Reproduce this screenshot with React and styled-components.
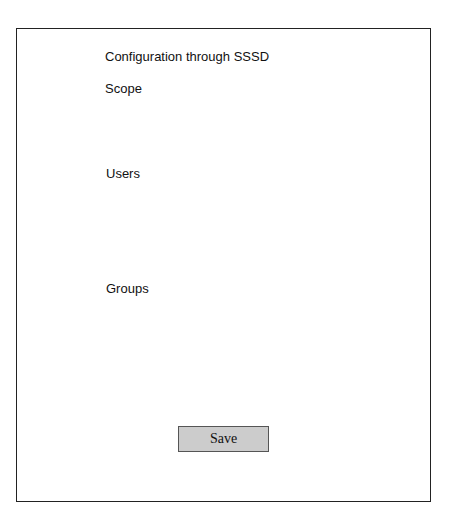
import React from "react";
import styled, { createGlobalStyle } from "styled-components";

const Global = createGlobalStyle`
  html, body { margin: 0; padding: 0; background: #fff; }
  body { font-family: "Liberation Sans", Arial, sans-serif; }
`;

const Frame = styled.div`
  box-sizing: border-box;
  margin: 28px 0 0 16px;
  width: 415px;
  height: 474px;
  border: 1px solid #222;
  background: #fff;
  display: flex;
  flex-direction: column;
  padding-top: 20px;
`;

const Section = styled.div`
  height: ${(p) => p.$h}px;
  padding-left: ${(p) => p.$indent}px;
  flex-shrink: 0;
`;

const Label = styled.div`
  font-size: 13px;
  line-height: 15px;
  color: #111;
`;

const Footer = styled.div`
  display: flex;
  justify-content: center;
`;

const Button = styled.button`
  box-sizing: border-box;
  width: 91px;
  height: 26px;
  background: #cccccc;
  border: 1px solid #555;
  border-radius: 0;
  font-family: "Liberation Serif", "Times New Roman", serif;
  font-size: 14px;
  color: #111;
  padding: 0;
`;

export default function App() {
  return (
    <>
      <Global />
      <Frame>
        <Section $h={32} $indent={88}>
          <Label>Configuration through SSSD</Label>
        </Section>
        <Section $h={85} $indent={88}>
          <Label>Scope</Label>
        </Section>
        <Section $h={115} $indent={89}>
          <Label>Users</Label>
        </Section>
        <Section $h={145} $indent={89}>
          <Label>Groups</Label>
        </Section>
        <Footer>
          <Button>Save</Button>
        </Footer>
      </Frame>
    </>
  );
}
